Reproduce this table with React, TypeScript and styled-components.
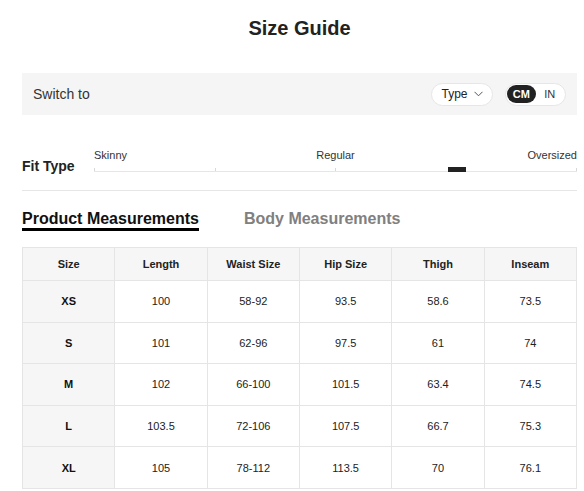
import React from "react";
import styled, { createGlobalStyle } from "styled-components";

const Global = createGlobalStyle`
  html, body { margin: 0; padding: 0; background: #fff; }
  body { font-family: "Liberation Sans", Arial, Helvetica, sans-serif; color: #222; }
  * { box-sizing: border-box; }
`;

const Page = styled.div`
  width: 555px;
  margin-left: 22px;
  padding-top: 16px;
`;

const Title = styled.h1`
  margin: 0;
  font-size: 20px;
  line-height: 24px;
  font-weight: 700;
  text-align: center;
  color: #222;
`;

const SwitchBar = styled.div`
  margin-top: 33px;
  height: 42px;
  background: #f5f5f5;
  display: flex;
  align-items: center;
  padding: 0 11px;
`;

const SwitchLabel = styled.span`
  font-size: 14px;
  color: #333;
  flex: 1;
`;

const Pill = styled.div`
  height: 23px;
  border: 1px solid #e6e6e6;
  border-radius: 12px;
  background: #fff;
  display: flex;
  align-items: center;
`;

const TypeButton = styled(Pill)`
  width: 62px;
  justify-content: center;
  gap: 6px;
  font-size: 12px;
  color: #222;
  margin-right: 12px;
`;

const UnitToggle = styled(Pill)`
  width: 61px;
  padding: 0 1px;
`;

const Unit = styled.span<{ $active?: boolean }>`
  width: 29px;
  height: 18px;
  border-radius: 9px;
  display: flex;
  align-items: center;
  justify-content: center;
  font-size: 11px;
  font-weight: ${(p) => (p.$active ? 700 : 400)};
  background: ${(p) => (p.$active ? "#222" : "transparent")};
  color: ${(p) => (p.$active ? "#fff" : "#333")};
`;

const FitRow = styled.div`
  margin-top: 34px;
  display: flex;
  align-items: flex-end;
`;

const FitLabel = styled.div`
  width: 72px;
  font-size: 14px;
  line-height: 16px;
  font-weight: 700;
  color: #222;
  margin-bottom: -2px;
`;

const Slider = styled.div`
  flex: 1;
  display: flex;
  flex-direction: column;
`;

const SliderLabels = styled.div`
  display: grid;
  grid-template-columns: 1fr auto 1fr;
  font-size: 11px;
  line-height: 13px;
  color: #333;
  margin-bottom: 5px;
`;

const SliderLabel = styled.span<{ $align: "start" | "center" | "end" }>`
  justify-self: ${(p) => p.$align};
`;

const Track = styled.div`
  position: relative;
  height: 5px;
  border-bottom: 1px solid #e6e6e6;
  display: flex;
  justify-content: space-between;
  align-items: flex-end;
`;

const Tick = styled.span`
  width: 1px;
  height: 3px;
  background: #d8d8d8;
`;

const Marker = styled.span`
  position: absolute;
  top: 0;
  width: 18px;
  height: 5px;
  background: #222;
`;

const Divider = styled.hr`
  margin: 18px 0 0;
  border: 0;
  border-top: 1px solid #e6e6e6;
`;

const Tabs = styled.div`
  margin-top: 18px;
  display: flex;
  gap: 45px;
`;

const Tab = styled.div<{ $active?: boolean }>`
  font-size: 16px;
  line-height: 19px;
  font-weight: 700;
  color: ${(p) => (p.$active ? "#111" : "#808080")};
  border-bottom: 3px solid ${(p) => (p.$active ? "#000" : "transparent")};
`;

const Table = styled.table`
  margin-top: 16px;
  width: 555px;
  border-collapse: collapse;
  table-layout: fixed;
  font-size: 11px;
  color: #222;
`;

const HeadCell = styled.th`
  height: 33px;
  padding: 0;
  background: #f6f6f6;
  border: 1px solid #e5e5e5;
  font-weight: 700;
  text-align: center;
`;

const Cell = styled.td<{ $size?: boolean }>`
  height: 41.6px;
  padding: 0;
  border: 1px solid #e5e5e5;
  text-align: center;
  background: ${(p) => (p.$size ? "#f6f6f6" : "#fff")};
  font-weight: ${(p) => (p.$size ? 700 : 400)};
  color: ${(p) => (p.$size ? "#111" : "#222")};
`;

const headers = ["Size", "Length", "Waist Size", "Hip Size", "Thigh", "Inseam"];
const rows = [
  ["XS", "100", "58-92", "93.5", "58.6", "73.5"],
  ["S", "101", "62-96", "97.5", "61", "74"],
  ["M", "102", "66-100", "101.5", "63.4", "74.5"],
  ["L", "103.5", "72-106", "107.5", "66.7", "75.3"],
  ["XL", "105", "78-112", "113.5", "70", "76.1"],
];

const markerPos = 73.2;

export default function App() {
  return (
    <>
      <Global />
      <Page>
        <Title>Size Guide</Title>
        <SwitchBar>
          <SwitchLabel>Switch to</SwitchLabel>
          <TypeButton>
            <span>Type</span>
            <svg width="9" height="6" viewBox="0 0 9 6" fill="none">
              <polyline points="0.5,0.8 4.5,4.8 8.5,0.8" stroke="#555" strokeWidth="1" />
            </svg>
          </TypeButton>
          <UnitToggle>
            <Unit $active>CM</Unit>
            <Unit>IN</Unit>
          </UnitToggle>
        </SwitchBar>
        <FitRow>
          <FitLabel>Fit Type</FitLabel>
          <Slider>
            <SliderLabels>
              <SliderLabel $align="start">Skinny</SliderLabel>
              <SliderLabel $align="center">Regular</SliderLabel>
              <SliderLabel $align="end">Oversized</SliderLabel>
            </SliderLabels>
            <Track>
              <Tick />
              <Tick />
              <Tick />
              <Tick />
              <Tick />
              <Marker style={{ left: `${markerPos}%` }} />
            </Track>
          </Slider>
        </FitRow>
        <Divider />
        <Tabs>
          <Tab $active>Product Measurements</Tab>
          <Tab>Body Measurements</Tab>
        </Tabs>
        <Table>
          <thead>
            <tr>
              {headers.map((h) => (
                <HeadCell key={h}>{h}</HeadCell>
              ))}
            </tr>
          </thead>
          <tbody>
            {rows.map((r) => (
              <tr key={r[0]}>
                {r.map((v, i) => (
                  <Cell key={i} $size={i === 0}>
                    {v}
                  </Cell>
                ))}
              </tr>
            ))}
          </tbody>
        </Table>
      </Page>
    </>
  );
}
